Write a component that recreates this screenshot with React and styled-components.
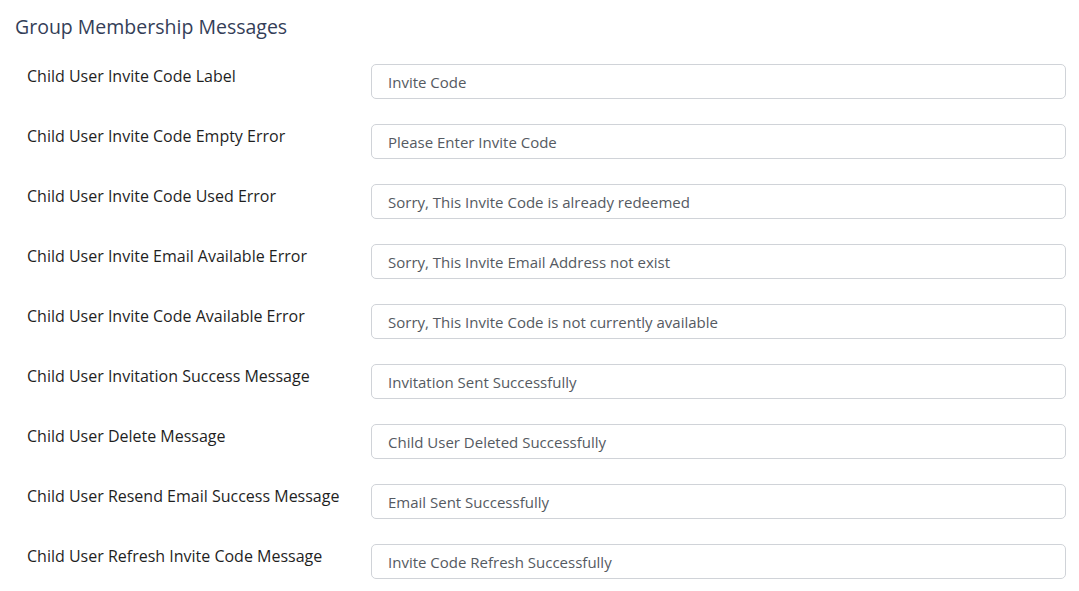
import styled, { createGlobalStyle } from "styled-components";

const GlobalStyle = createGlobalStyle`
  body {
    margin: 0;
    background: #ffffff;
    font-family: 'Open Sans', 'Liberation Sans', sans-serif;
  }
`;

const rows = [
  ["Child User Invite Code Label", "Invite Code"],
  ["Child User Invite Code Empty Error", "Please Enter Invite Code"],
  ["Child User Invite Code Used Error", "Sorry, This Invite Code is already redeemed"],
  ["Child User Invite Email Available Error", "Sorry, This Invite Email Address not exist"],
  ["Child User Invite Code Available Error", "Sorry, This Invite Code is not currently available"],
  ["Child User Invitation Success Message", "Invitation Sent Successfully"],
  ["Child User Delete Message", "Child User Deleted Successfully"],
  ["Child User Resend Email Success Message", "Email Sent Successfully"],
  ["Child User Refresh Invite Code Message", "Invite Code Refresh Successfully"],
];

export default function App() {
  return (
    <>
      <GlobalStyle />
      <Section>
        <Heading>Group Membership Messages</Heading>
        <Fields>
          {rows.map(([label, value]) => (
            <Row key={label}>
              <Label>{label}</Label>
              <Input defaultValue={value} />
            </Row>
          ))}
        </Fields>
      </Section>
    </>
  );
}

const Section = styled.div`
  padding: 14px 13px 0 15px;
`;

const Heading = styled.h2`
  margin: 0;
  font-size: 19.5px;
  font-weight: 500;
  line-height: 26px;
  color: #343e58;
`;

const Fields = styled.div`
  display: flex;
  flex-direction: column;
  gap: 25px;
  margin-top: 24px;
  padding-left: 12px;
`;

const Row = styled.div`
  display: flex;
  align-items: flex-start;
`;

const Label = styled.label`
  width: 344px;
  flex-shrink: 0;
  padding-top: 1px;
  font-size: 16px;
  line-height: 22px;
  font-weight: 500;
  color: #1f1f1f;
`;

const Input = styled.input`
  flex: 1;
  height: 35px;
  box-sizing: border-box;
  padding: 0 16px;
  border: 1px solid #d0d3d8;
  border-radius: 5px;
  background: #fff;
  font-family: inherit;
  font-size: 15px;
  color: #555a62;
  outline: none;
`;
